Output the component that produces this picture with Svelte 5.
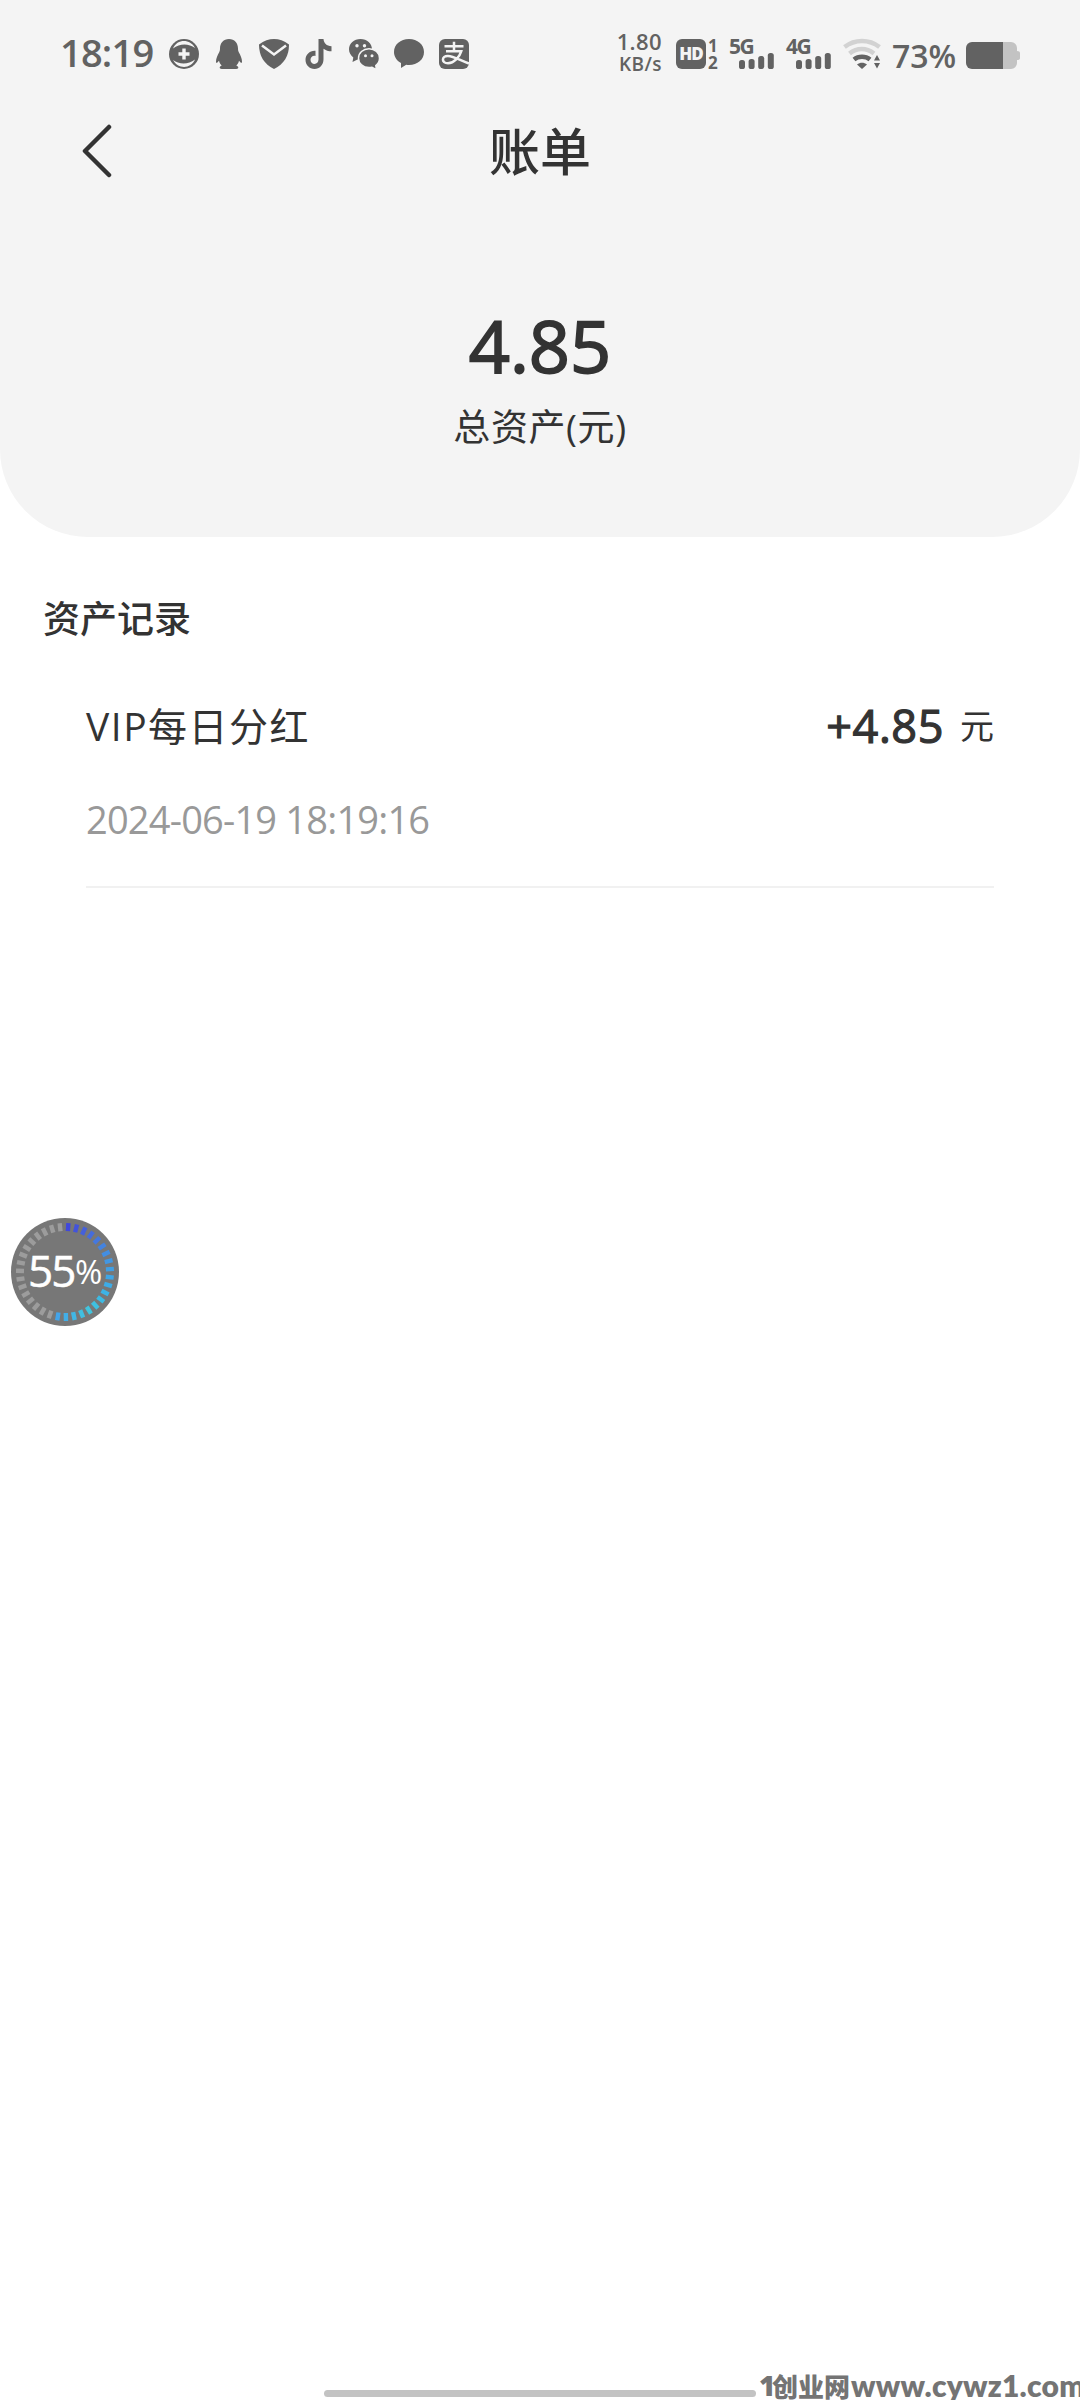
<script>
    // 总资产
    const total = "4.85";

    // 资产记录
    const records = [
        {
            name: "VIP每日分红",
            amount: "+4.85",
            unit: "元",
            time: "2024-06-19 18:19:16",
        },
    ];

    // 手机信号
    const signals = ["5G", "4G"];
    const bars = [9, 10, 13, 16];

    // 悬浮球进度
    const percent = 55;
    const tickCount = 35;
    const tickColors = [
        "#4048dc", "#4253dc", "#4460dc", "#456cdd", "#4578de", "#4483df", "#438ee1",
        "#4297e3", "#409fe5", "#3fa6e6", "#3eace6", "#3db3e5", "#3dbae3", "#3fc0e0",
        "#42c4dd", "#41bfe0", "#41b7e4", "#42aee7", "#43a4e9",
    ];
    const ticks = Array.from({ length: tickCount }, (_, i) => ({
        angle: 4 + (i * 360) / tickCount,
        color: tickColors[i] || "#9c9c9c",
    }));
</script>

<div class="screen">
    <header>
        <!-- 状态栏 -->
        <div class="status">
            <span class="clock">18:19</span>
            <div class="apps">
                <svg viewBox="0 0 30 30">
                    <circle cx="15" cy="15" r="15" />
                    <path class="swirl" d="M4 9.500C8 0 21-.5 26 9 20 4.500 11 4 4 9.500zM26 20.500C22 30 9 30.500 4 21c6 4.500 15 5 22-.5z" />
                    <path class="line" d="M15 9.500v11M9.500 15h11" stroke-width="3.400" />
                </svg>
                <svg viewBox="0 0 30 30">
                    <path d="M15 0C9.500 0 6 4 6 9.500c0 1.500-.2 2.500-.8 3.800C3.500 16.500 2 19.500 2 22.500c0 1.500.8 1.800 1.600.8l1.400-1.600c.5 2 1.400 3.600 2.700 4.900-1.300.6-2 1.300-2 2.200 0 1 1.300 1.200 3.700 1.200h11.200c2.400 0 3.700-.2 3.700-1.200 0-.9-.7-1.600-2-2.200 1.300-1.300 2.200-2.900 2.700-4.900l1.400 1.600c.8 1 1.600.7 1.600-.8 0-3-1.500-6-3.200-9.200-.6-1.300-.8-2.300-.8-3.800C24 4 20.500 0 15 0z" />
                </svg>
                <svg viewBox="0 0 30 30">
                    <path d="M0 5.500C5 1.500 10 0 15 0s10 1.500 15 5.500C30 17 25 25 15 30 5 25 0 17 0 5.500z" />
                    <path class="line" d="M3 6.500 15 15.500 27 6.500" stroke-width="2.500" />
                </svg>
                <svg viewBox="0 0 30 30">
                    <path d="M14.500 0h5c.3 4 3 7 8 7.300v5c-3 0-5.800-1-8-2.600v10.600C19.500 26 15.500 30 10.500 30S1.500 26 1.500 20.800s4.500-9.500 10-9v5.200c-2.800-.7-5 1.200-5 3.800 0 2.400 1.800 4.200 4 4.200s4-1.800 4-4.400z" />
                </svg>
                <svg viewBox="0 0 30 30">
                    <path d="M11.500 0C5 0 0 4.500 0 10.300c0 3.300 1.700 6.200 4.300 8.100L3.500 23l5-2.600c1 .2 2 .3 3 .3 6.500 0 11.500-4.600 11.500-10.400S18 0 11.500 0z" />
                    <path class="cut" d="M20 9.800c6 0 10.500 4.200 10.500 9.400 0 3-1.500 5.600-3.700 7.300l.6 4.100-4.400-2.300c-1 .2-2 .3-3 .3-6 0-10.500-4.200-10.500-9.400S14 9.800 20 9.800z" />
                    <circle class="hole" cx="8" cy="6.800" r="1.700" />
                    <circle class="hole" cx="15.500" cy="6.800" r="1.700" />
                    <circle class="hole" cx="16.500" cy="16.800" r="1.500" />
                    <circle class="hole" cx="23" cy="16.800" r="1.500" />
                </svg>
                <svg viewBox="0 0 30 30">
                    <path d="M15 0C6.500 0 0 5.500 0 13c0 4.600 2.600 8.600 7 11v5l5.200-3.200c1 .1 1.800.2 2.800.2 8.500 0 15-5.500 15-13S23.500 0 15 0z" />
                </svg>
                <svg viewBox="0 0 30 30">
                    <rect width="30" height="30" rx="6" />
                    <path class="line" d="M5.500 7.200h19M15 2.800v9.400M7 12.300h15.200C20.500 18 15 24.300 9 24.300c-7 0-6.500-7.500 0-7.300 6 .2 12 4.500 21 7.500" stroke-width="2.500" />
                </svg>
            </div>

            <div class="speed">
                <span>1.80</span>
                <span class="speed-unit">KB/s</span>
            </div>
            <span class="hd">HD</span>
            <div class="sims">
                <span>1</span>
                <span>2</span>
            </div>
            {#each signals as net}
                <div class="signal">
                    <span>{net}</span>
                    <svg viewBox="0 0 35 16">
                        {#each bars as h, i}
                            <rect x={i * 9.6} y={16 - h} width="6" height={h} rx="2.600" />
                        {/each}
                    </svg>
                </div>
            {/each}
            <svg class="wifi" viewBox="0 0 38 30">
                <path class="wave faint" d="M1.500 8C12 0 26 0 36.500 8" />
                <path class="wave faint" d="M6.500 14.500c7.500-6 17-6 24.500 0" />
                <path class="wave" d="M11 20.500c4.500-3.600 11.500-3.600 16 0" />
                <path d="M14 25.500c3-2.200 7-2.200 10 0L19 30z" />
                <path d="M31 21.500 34 16l3 5.500zM31 24l3 5.500 3-5.500z" />
            </svg>
            <span class="battery-text">73%</span>
            <svg class="battery" viewBox="0 0 54 27">
                <path class="rest" d="M36 0h9a6 6 0 0 1 6 6v3q3 0 3 2v5q0 2-3 2v3a6 6 0 0 1-6 6h-9z" />
                <path d="M6 0h31v27H6a6 6 0 0 1-6-6V6a6 6 0 0 1 6-6z" />
            </svg>
        </div>

        <!-- 标题栏 -->
        <nav>
            <svg class="back" viewBox="0 0 30 54">
                <path d="M27 3 3 27l24 24" />
            </svg>
            <h1>账单</h1>
        </nav>

        <div class="total">{total}</div>
        <div class="total-label">总资产(元)</div>
    </header>

    <main>
        <h2>资产记录</h2>
        {#each records as record}
            <div class="record">
                <div class="record-top">
                    <span class="name">{record.name}</span>
                    <span class="amount">{record.amount}</span>
                    <span class="unit">{record.unit}</span>
                </div>
                <div class="time">{record.time}</div>
            </div>
        {/each}
    </main>

    <!-- 悬浮球 -->
    <div class="ball">
        <svg viewBox="-54 -54 108 108">
            {#each ticks as tick}
                <rect x="-2.200" y="-49" width="4.400" height="8" fill={tick.color} transform="rotate({tick.angle})" />
            {/each}
        </svg>
        <span class="ball-number">{percent}</span>
        <span class="ball-sign">%</span>
    </div>

    <footer>
        <div class="home-bar"></div>
        <div class="mark">
            <span class="mark-one">1</span>
            <span class="mark-name">创业网</span>
            <span class="mark-url">www.cywz1.com</span>
        </div>
    </footer>
</div>

<style>
    :global(body) {
        margin: 0;
        background: #fff;
    }

    .screen {
        position: relative;
        display: flex;
        flex-direction: column;
        width: 1080px;
        height: 2400px;
        overflow: hidden;
        background: #fff;
        color: #333;
        font-family: "Open Sans", "Noto Sans CJK SC", sans-serif;
        white-space: nowrap;
    }

    header {
        height: 537px;
        background: #f4f4f4;
        border-radius: 0 0 88px 88px;
        text-align: center;
    }

    /* 状态栏 */
    .status {
        display: flex;
        align-items: flex-start;
        height: 101px;
        padding-left: 60px;
        box-sizing: border-box;
        color: #626262;
        fill: #626262;
        text-align: left;
    }

    .status > * {
        flex-shrink: 0;
    }

    .status svg {
        display: block;
        overflow: visible;
    }

    .clock {
        width: 109px;
        margin-top: 27px;
        font-size: 38px;
        font-weight: 600;
        line-height: 50px;
        letter-spacing: -0.8px;
    }

    .apps {
        display: flex;
        gap: 15px;
        width: 448px;
        margin-top: 39px;
    }

    .apps svg {
        width: 30px;
        height: 30px;
    }

    .line {
        fill: none;
        stroke: #f4f4f4;
    }

    .cut {
        stroke: #f4f4f4;
        stroke-width: 1.5;
    }

    .hole,
    .swirl {
        fill: #f4f4f4;
    }

    .speed {
        display: flex;
        flex-direction: column;
        align-items: flex-end;
        width: 45px;
        margin-top: 30px;
        font-size: 22px;
        font-weight: 600;
        line-height: 23px;
        letter-spacing: 0.4px;
    }

    .speed-unit {
        font-size: 19px;
    }

    .hd {
        width: 30px;
        height: 30px;
        margin: 39px 0 0 14px;
        border-radius: 6px;
        background: #626262;
        color: #f4f4f4;
        font-size: 17px;
        font-weight: 800;
        line-height: 30px;
        text-align: center;
        letter-spacing: -1px;
    }

    .sims {
        display: flex;
        flex-direction: column;
        width: 23px;
        margin-top: 37px;
        font-size: 17px;
        font-weight: 700;
        line-height: 17px;
        text-indent: 2px;
    }

    .signal {
        width: 57px;
        margin-top: 38px;
        font-size: 21px;
        font-weight: 700;
        line-height: 15px;
        letter-spacing: -1.5px;
    }

    .signal span {
        display: block;
        padding-top: 1px;
        margin-bottom: -1px;
    }

    .signal svg {
        width: 35px;
        height: 16px;
        margin-left: 10px;
    }

    .wifi {
        width: 38px;
        height: 30px;
        margin: 39px 0 0 0;
    }

    .wave {
        fill: none;
        stroke: #626262;
        stroke-width: 4.5;
    }

    .wave.faint {
        stroke: #d2d2d2;
    }

    .battery-text {
        width: 74px;
        margin: 32px 0 0 11px;
        font-size: 32px;
        font-weight: 600;
        line-height: 48px;
    }

    .battery {
        width: 54px;
        height: 27px;
        margin-top: 42px;
    }

    .rest {
        fill: #c3c3c3;
    }

    /* 标题栏 */
    nav {
        display: grid;
        grid-template-columns: 82px 1fr 82px;
        align-items: center;
        height: 100px;
    }

    .back {
        width: 30px;
        height: 54px;
        margin-left: 82px;
        fill: none;
        stroke: #333;
        stroke-width: 4.5;
        stroke-linecap: round;
        stroke-linejoin: round;
    }

    h1 {
        margin: 0;
        font-size: 51px;
        font-weight: 500;
        line-height: 98px;
    }

    .total {
        margin-top: 99px;
        font-size: 72px;
        line-height: 90px;
        -webkit-text-stroke: 1.8px #333;
    }

    .total-label {
        margin-top: 9px;
        font-size: 37px;
        line-height: 56px;
        letter-spacing: 0.6px;
    }

    /* 资产记录 */
    main {
        flex: 1;
        padding-top: 52px;
    }

    h2 {
        margin: 0;
        padding-left: 43px;
        font-size: 37px;
        font-weight: 500;
        line-height: 60px;
    }

    .record {
        height: 237px;
        margin: 0 86px;
        border-bottom: 2px solid #f1f1f1;
    }

    .record-top {
        display: flex;
        padding-top: 47px;
        line-height: 60px;
    }

    .name {
        flex: 1;
        font-size: 39px;
        letter-spacing: 1.5px;
    }

    .amount {
        font-size: 45px;
        letter-spacing: 0.6px;
        -webkit-text-stroke: 1.2px #333;
    }

    .unit {
        margin-left: 16px;
        font-size: 34px;
    }

    .time {
        margin-top: 33px;
        color: #999;
        font-size: 38px;
        line-height: 60px;
        letter-spacing: -0.8px;
    }

    /* 悬浮球 */
    .ball {
        position: absolute;
        left: 11px;
        top: 1218px;
        display: flex;
        width: 108px;
        height: 108px;
        border-radius: 50%;
        background: #777;
        color: #fff;
        line-height: 104px;
    }

    .ball svg {
        width: 108px;
        margin-right: -108px;
    }

    .ball-number {
        width: 46px;
        margin-left: 17px;
        font-size: 44px;
        letter-spacing: -2px;
        -webkit-text-stroke: 0.5px #fff;
    }

    .ball-sign {
        padding-top: 2px;
        margin-left: 1px;
        font-size: 33px;
    }

    /* 底部 */
    footer {
        display: flex;
        height: 30px;
        padding-left: 324px;
    }

    .home-bar {
        flex-shrink: 0;
        width: 432px;
        height: 7px;
        margin-top: 20px;
        border-radius: 4px;
        background: #c3c3c3;
    }

    .mark {
        display: flex;
        flex-shrink: 0;
        margin-left: 3px;
        color: #747474;
        font-weight: 800;
        line-height: 31px;
    }

    .mark-one {
        width: 13px;
        font-size: 28px;
    }

    .mark-name {
        width: 79px;
        font-family: "Noto Sans CJK SC", sans-serif;
        font-size: 26px;
        font-weight: 900;
    }

    .mark-url {
        font-family: Lato, sans-serif;
        font-size: 30px;
        letter-spacing: 0.2px;
    }
</style>
